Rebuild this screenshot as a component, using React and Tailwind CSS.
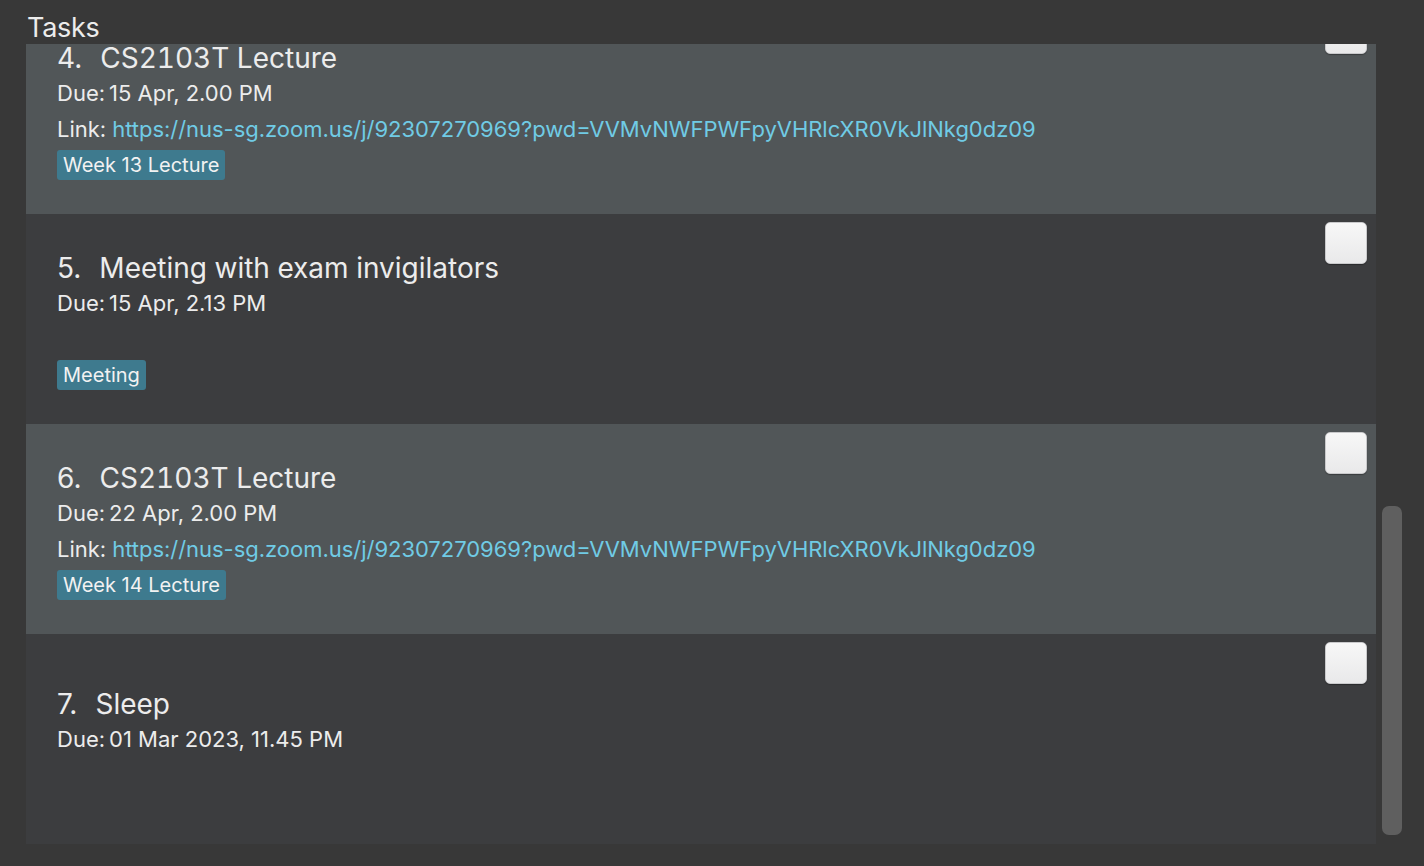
import React from "react";

const URL = "https://nus-sg.zoom.us/j/92307270969?pwd=VVMvNWFPWFpyVHRlcXR0VkJlNkg0dz09";

const tasks = [
  { n: "4.", title: "CS2103T Lecture", due: "15 Apr, 2.00 PM", link: URL, tag: "Week 13 Lecture", odd: true },
  { n: "5.", title: "Meeting with exam invigilators", due: "15 Apr, 2.13 PM", link: null, tag: "Meeting", odd: false },
  { n: "6.", title: "CS2103T Lecture", due: "22 Apr, 2.00 PM", link: URL, tag: "Week 14 Lecture", odd: true },
  { n: "7.", title: "Sleep", due: "01 Mar 2023, 11.45 PM", link: null, tag: null, odd: false, short: true },
];

function Row({ t, first }) {
  return (
    <div
      className={`relative h-[210px] shrink-0 pl-[31px] flex flex-col ${t.odd ? "bg-[#515658]" : "bg-[#3c3d3f]"} ${first ? "-mt-[40px]" : ""} ${t.short ? "pt-[53px]" : "pt-[37px]"}`}
    >
      <div className="absolute right-[9px] top-[8px] w-[42px] h-[42px] rounded-[5px] bg-gradient-to-b from-[#f7f7f7] to-[#e9e9ea] border border-[#c9c9cb] shadow-[0_1px_1px_rgba(0,0,0,0.3)]" />
      <div className="h-[34px] flex items-center text-[28px] text-[#ececec] leading-none">
        <span>{t.n}</span>
        <span className="ml-[18px] tabular-nums">{t.title}</span>
      </div>
      <div className="h-[35px] flex items-center text-[22px] text-[#ececec] leading-none">
        <span>Due:</span>
        <span className="ml-[4px]">{t.due}</span>
      </div>
      {!t.short && (
        <div className="h-[37px] flex items-center text-[22px] leading-none">
          {t.link && (
            <>
              <span className="text-[#ececec]">Link:</span>
              <span className="ml-[6px] text-[#70cbe5] tracking-[-0.03px]">{t.link}</span>
            </>
          )}
        </div>
      )}
      {t.tag && (
        <div className="mt-[3px] self-start h-[30px] px-[6px] flex items-center rounded-[3px] bg-[#3e7a8e] text-[20px] text-[#f2f2f2] leading-none">
          {t.tag}
        </div>
      )}
    </div>
  );
}

export default function App() {
  return (
    <div
      className="w-[1424px] h-[866px] bg-[#383838] flex flex-col overflow-hidden"
      style={{ fontFamily: "Inter, 'Noto Sans', sans-serif" }}
    >
      <div className="h-[44px] pl-[27px] pt-[14px] text-[27px] leading-none text-[#ececec] tracking-[-0.3px]">Tasks</div>
      <div className="flex h-[800px] pl-[26px]">
        <div className="w-[1350px] h-[800px] overflow-hidden flex flex-col">
          {tasks.map((t, i) => (
            <Row key={i} t={t} first={i === 0} />
          ))}
        </div>
        <div className="relative w-[48px] h-[800px]">
          <div className="absolute left-[6px] top-[462px] w-[20px] h-[329px] rounded-[7px] bg-[#5f5f5f]" />
        </div>
      </div>
    </div>
  );
}
